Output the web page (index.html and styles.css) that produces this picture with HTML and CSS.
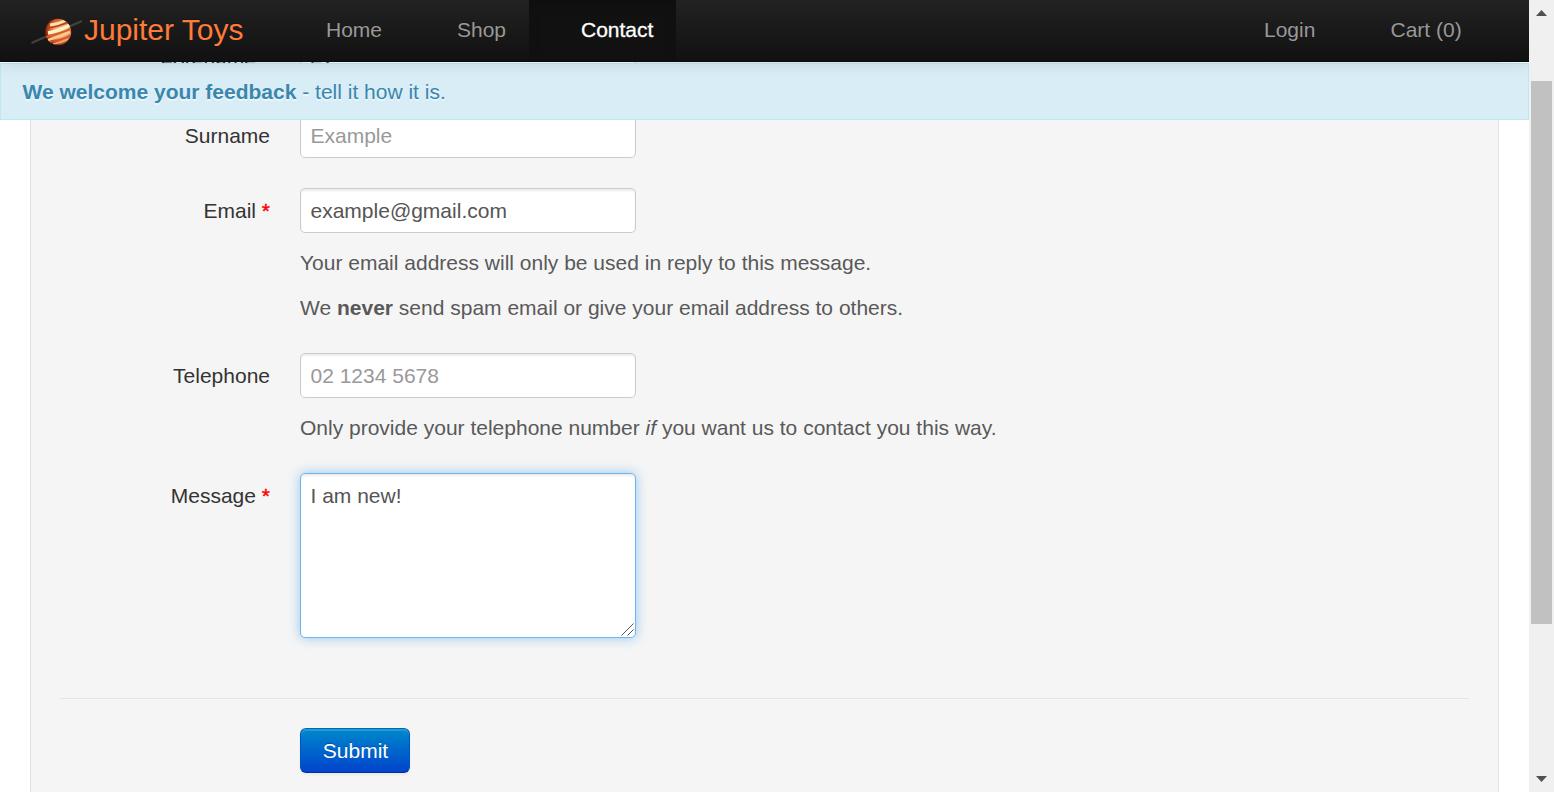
FILE: index.html
```html
<!DOCTYPE html>
<html lang="en">
<head>
<meta charset="utf-8">
<title>Jupiter Toys</title>
<link rel="stylesheet" href="styles.css">
</head>
<body>
<div class="window">
  <div class="page">
    <nav class="navbar">
      <a class="brand">
        <svg class="logo" width="52" height="34" viewBox="0 0 52 34">
          <defs>
            <radialGradient id="planet" cx=".62" cy=".45" r=".62">
              <stop offset="0" stop-color="#ffd09a"/><stop offset=".45" stop-color="#f09a60"/><stop offset=".75" stop-color="#cc5528"/><stop offset="1" stop-color="#5c1408"/>
            </radialGradient>
            <clipPath id="disc"><circle cx="28" cy="18" r="13"/></clipPath>
          </defs>
          <path d="M1.500 29L52 7" stroke="#44403c" stroke-width="2.200"/>
          <circle cx="28" cy="18" r="13.200" fill="url(#planet)"/>
          <g class="bands" clip-path="url(#disc)" fill="none">
            <path d="M20 11Q29 10 37 6" stroke="#ffe2ac" stroke-width="3"/>
            <path d="M17 14Q28 13 38 8" stroke="#b5431b" stroke-width="1.500"/>
            <path d="M18 19Q29 17 40 11" stroke="#fff0c5" stroke-width="3.500"/>
            <path d="M16 23Q29 20 41 15" stroke="#d65f29" stroke-width="2"/>
            <path d="M18 26Q29 23 40 18" stroke="#ffc791" stroke-width="2.500"/>
            <path d="M19 28Q29 27 40 22" stroke="#cf5526" stroke-width="1.800"/>
            <path d="M23 30Q31 29 38 25" stroke="#eda574" stroke-width="1.500"/>
          </g>
        </svg>
        <span class="brand-name">Jupiter Toys</span>
      </a>
      <a class="nav-link home">Home</a>
      <a class="nav-link shop">Shop</a>
      <a class="nav-link active">Contact</a>
      <a class="nav-link login">Login</a>
      <a class="nav-link cart">Cart (0)</a>
    </nav>
    <div class="alert"><span><strong>We welcome your feedback</strong> - tell it how it is.</span></div>
    <form class="well">
      <div class="group">
        <label class="label">Forename <span class="req">*</span></label>
        <div class="controls"><input class="field" value="ex"></div>
      </div>
      <div class="group">
        <label class="label">Surname</label>
        <div class="controls"><input class="field" placeholder="Example"></div>
      </div>
      <div class="group">
        <label class="label">Email <span class="req">*</span></label>
        <div class="controls">
          <input class="field" value="example@gmail.com">
          <p class="help">Your email address will only be used in reply to this message.</p>
          <p class="help">We <strong>never</strong> send spam email or give your email address to others.</p>
        </div>
      </div>
      <div class="group">
        <label class="label">Telephone</label>
        <div class="controls">
          <input class="field" placeholder="02 1234 5678">
          <p class="help">Only provide your telephone number <em>if</em> you want us to contact you this way.</p>
        </div>
      </div>
      <div class="group">
        <label class="label">Message <span class="req">*</span></label>
        <div class="controls"><div class="textarea">I am new!<svg class="grip" width="13" height="13" viewBox="0 0 13 13"><path d="M.5 12.5l12-12M6.500 12.5l6-6" stroke="#555" fill="none"/></svg></div></div>
      </div>
      <div class="actions"><button class="submit" type="button">Submit</button></div>
    </form>
  </div>
  <div class="scrollbar">
    <svg width="11" height="6" viewBox="0 0 11 6"><path d="M5.500 0L11 6H0Z" fill="#505050"/></svg>
    <div class="thumb"></div>
    <svg width="11" height="6" viewBox="0 0 11 6"><path d="M0 0H11L5.500 6Z" fill="#505050"/></svg>
  </div>
</div>
</body>
</html>
```
FILE: styles.css
```css
* { box-sizing: border-box; }
body { margin: 0; font: 21px/30px "Liberation Sans", Arial, sans-serif; color: #333; background: #fff; }
.window { display: flex; height: 792px; overflow: hidden; }
.page { position: relative; width: 1529px; height: 792px; overflow: hidden; }
.navbar { position: absolute; z-index: 3; top: 0; left: 0; width: 100%; height: 62px; display: flex; padding-left: 30px; color: #999; background: linear-gradient(#222, #111); border-bottom: 1px solid #090909; box-shadow: 0 2px 15px rgba(0,0,0,.1); text-shadow: 0 -1px 0 rgba(0,0,0,.25); }
.brand { display: flex; width: 258px; color: #ff7b39; font-size: 30px; }
.logo { margin: 14px 2px 0 0; flex: none; }
.bands { filter: blur(.5px); }
.brand-name { white-space: nowrap; }
.nav-link { padding-top: 15px; white-space: nowrap; }
.brand-name { padding-top: 15px; }
.home { width: 131px; padding-left: 38px; }
.shop { width: 110px; padding-left: 38px; }
.active { width: 147px; padding-left: 52px; color: #fff; background: #111; box-shadow: inset 0 4px 12px rgba(0,0,0,.125); -webkit-text-stroke: .3px #fff; }
.login { margin-left: auto; width: 126.5px; }
.cart { width: 138.5px; }
.alert { position: absolute; z-index: 2; top: 63px; left: 0; width: 100%; height: 57px; padding: 13px 21.5px; color: #3a87ad; background: #d9edf7; border: 1px solid #bce8f1; text-shadow: 0 2px 0 rgba(255,255,255,.5); }
.well { margin: 0 30px; height: 860px; padding: 38px 29px 0 28px; background: #f5f5f5; border: solid #e3e3e3; border-width: 0 1px; }
.group { display: flex; margin-bottom: 30px; }
.label { width: 211px; padding-top: 8px; text-align: right; }
.req { color: red; -webkit-text-stroke: .4px red; }
.controls { margin-left: 30px; }
.field { display: block; width: 336px; height: 45px; padding: 6px 9.5px; font: inherit; color: #555; background: #fff; border: 1px solid #ccc; border-radius: 5px; box-shadow: inset 0 2px 2px rgba(0,0,0,.075); outline: 0; }
.field::placeholder { color: #999; opacity: 1; }
.help { margin: 15px 0 0; color: #595959; white-space: nowrap; }
.textarea { position: relative; width: 336px; height: 165px; padding: 7px 9.5px; color: #555; background: #fff; border: 1px solid #6fb5ef; border-radius: 5px; box-shadow: inset 0 2px 2px rgba(0,0,0,.075), 0 0 12px rgba(82,168,236,.6); }
.grip { position: absolute; right: 1px; bottom: 1px; }
.actions { margin: 60px 0 0 1px; padding: 29px 0 0 240px; border-top: 1px solid #e5e5e5; }
.submit { display: block; width: 110px; height: 45px; padding: 0 0 0 1px; font: inherit; color: #fff; text-shadow: 0 -1px 0 rgba(0,0,0,.25); background: linear-gradient(#08c, #04c); border: 1px solid; border-color: #0067b5 #0055bd #002f9c; border-radius: 6px; box-shadow: inset 0 2px 0 rgba(255,255,255,.15), 0 2px 3px rgba(0,0,0,.05); }
.scrollbar { width: 25px; padding: 10px 2px; display: flex; flex-direction: column; align-items: center; background: #f0f0f0; }
.thumb { width: 21px; height: 543px; margin: 65px 0 auto; background: #c1c1c1; }
```
